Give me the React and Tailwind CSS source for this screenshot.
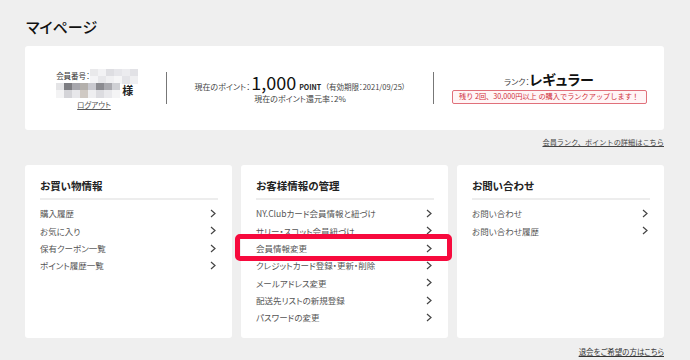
import React from 'react';

// Mosaïque qui masque le numéro et le nom du membre
const mosaiqueNumero = [
  ['bg-[#e9e9eb]', 'bg-[#f2f2f4]', 'bg-[#dedee2]', 'bg-[#e6e6ea]', 'bg-[#ececef]', 'bg-[#e2e2e6]'],
  ['bg-[#f4f4f6]', 'bg-[#e7e7ea]', 'bg-[#f0f0f2]', 'bg-[#f6f6f7]', 'bg-[#e4e4e8]', 'bg-[#efeff1]'],
];

const mosaiqueNom = [
  ['bg-[#e4e4e6]', 'bg-[#7d7d82]', 'bg-[#a7a7ad]', 'bg-[#b4b0ac]', 'bg-[#c9c9cf]', 'bg-[#8b8b90]', 'bg-[#a9a9ae]', 'bg-[#cfd0d4]'],
  ['bg-[#f3f3f4]', 'bg-[#d4d4d8]', 'bg-[#e7e7ea]', 'bg-[#cfc9c3]', 'bg-[#eeeef0]', 'bg-[#dcdce0]', 'bg-[#e9e9ec]', 'bg-[#f4f4f5]'],
];

function Mosaique({ lignes }) {
  return (
    <div className="flex flex-col">
      {lignes.map((ligne, i) => (
        <div key={i} className="flex">
          {ligne.map((c, j) => (
            <div key={j} className={`w-[8px] h-[7.5px] ${c}`}></div>
          ))}
        </div>
      ))}
    </div>
  );
}

function Chevron() {
  return (
    <svg width="6" height="9" viewBox="0 0 6 9" className="shrink-0">
      <polyline points="1,1 5,4.5 1,8" fill="none" stroke="#444" strokeWidth="1.2" />
    </svg>
  );
}

const cartes = [
  { titre: 'お買い物情報', items: ['購入履歴', 'お気に入り', '保有クーポン一覧', 'ポイント履歴一覧'] },
  {
    titre: 'お客様情報の管理',
    items: [
      'NY.Clubカード会員情報と紐づけ',
      'サリー・スコット会員紐づけ',
      '会員情報変更',
      'クレジットカード登録・更新・削除',
      'メールアドレス変更',
      '配送先リストの新規登録',
      'パスワードの変更',
    ],
  },
  { titre: 'お問い合わせ', items: ['お問い合わせ', 'お問い合わせ履歴'] },
];

export default function App() {
  return (
    <div
      className="w-[690px] h-[360px] overflow-hidden bg-[#efefef] pl-[25px] pr-[26px] pt-[18px] text-[#333] [font-feature-settings:'palt'] font-['Noto_Sans_CJK_JP','Noto_Sans',sans-serif]"
    >
      {/* Titre */}
      <h1 className="text-[15px] leading-[17px] font-medium text-[#111] pl-[1px]">マイページ</h1>

      {/* Carte membre */}
      <div className="mt-[11px] h-[84px] bg-white rounded-[3px] flex items-center">
        <div className="w-[141px] flex justify-center">
          <div className="flex flex-col pt-[2px] pl-[3px]">
            <div className="flex items-center">
              <span className="text-[7.5px] text-[#333] leading-none">会員番号：</span>
              <Mosaique lignes={mosaiqueNumero} />
            </div>
            <div className="flex items-center -mt-[1px]">
              <Mosaique lignes={mosaiqueNom} />
              <span className="ml-[2px] text-[11px] font-bold text-[#222] leading-none">様</span>
            </div>
            <a className="self-center -ml-[6px] mt-[2px] text-[7.5px] leading-[10px] text-[#555] underline">ログアウト</a>
          </div>
        </div>
        <div className="w-px h-[32px] bg-[#777]"></div>
        <div className="w-[266px] flex flex-col items-center">
          <div className="flex items-baseline text-[#444] leading-none">
            <span className="text-[8px]">現在のポイント：</span>
            <span className="text-[18px] text-[#111] ml-[1px]">1,000</span>
            <span className="text-[7px] font-bold ml-[3px] text-[#222]">POINT</span>
            <span className="text-[7.5px] ml-[4px]">（有効期限：2021/09/25）</span>
          </div>
          <div className="mt-[4px] text-[8px] text-[#444] leading-none">現在のポイント還元率：2%</div>
        </div>
        <div className="w-px h-[32px] bg-[#777]"></div>
        <div className="flex-1 flex flex-col items-center">
          <div className="flex items-baseline leading-none">
            <span className="text-[8px] text-[#444]">ランク：</span>
            <span className="text-[14px] font-bold text-[#111]">レギュラー</span>
          </div>
          <div className="mt-[4px] w-[195px] h-[14px] border border-[#e0707a] bg-[#fff5f6] rounded-[2px] flex items-center justify-center text-[7.2px] text-[#d0303c] leading-none [font-feature-settings:normal]">
            残り 2回、30,000円以上 の購入でランクアップします！
          </div>
        </div>
      </div>

      {/* Lien détails */}
      <div className="mt-[6px] flex justify-end">
        <a className="text-[7.2px] leading-[12px] text-[#444] underline [font-feature-settings:normal]">会員ランク、ポイントの詳細はこちら</a>
      </div>

      {/* Cartes de menus */}
      <div className="mt-[17px] grid grid-cols-3 gap-[9px]">
        {cartes.map((carte) => (
          <div key={carte.titre} className="h-[173px] bg-white rounded-[3px] pl-[15px] pr-[14px] pt-[14px]">
            <h2 className="text-[10.5px] font-bold text-[#222] leading-[14px] pb-[5px] border-b-2 border-[#ededed]">
              {carte.titre}
            </h2>
            <ul className="mt-[5px]">
              {carte.items.map((item) => (
                <li key={item} className="relative h-[17.3px] flex items-center justify-between pr-[2px]">
                  <span className="text-[8.5px] text-[#555] leading-none">{item}</span>
                  <Chevron />
                  {item === '会員情報変更' && (
                    <div className="absolute -left-[21px] -right-[18px] -top-[6px] -bottom-[4px] border-[5px] border-[#f70a3d] rounded-[5px]"></div>
                  )}
                </li>
              ))}
            </ul>
          </div>
        ))}
      </div>

      {/* Lien désinscription */}
      <div className="mt-[8px] flex justify-end">
        <a className="text-[7.5px] leading-[12px] text-[#333] underline">退会をご希望の方はこちら</a>
      </div>
    </div>
  );
}
